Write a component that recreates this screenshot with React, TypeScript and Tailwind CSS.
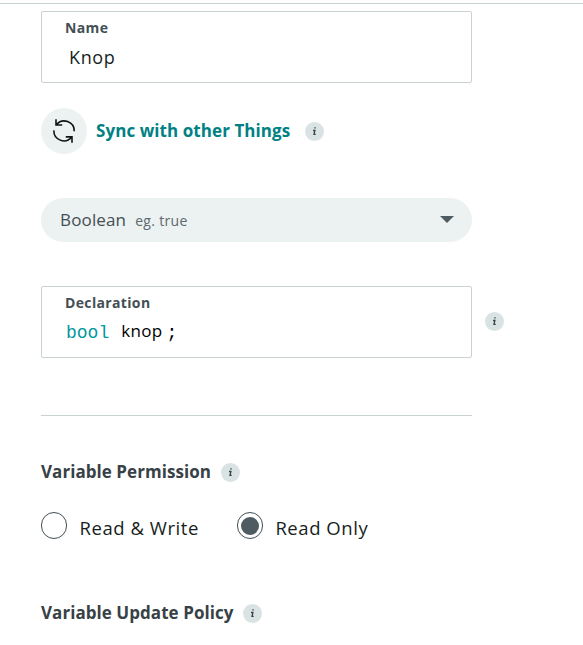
import React from "react";

function Info({ className = "" }: { className?: string }) {
  return (
    <span className={`flex h-[19px] w-[19px] shrink-0 items-center justify-center rounded-full bg-[#dae3e3] ${className}`}>
      <svg width="5" height="9" viewBox="0 0 5 9" fill="none" stroke="#374146" strokeWidth="1.3">
        <path d="M2.3 0.9h1.4M1 3.5h1.9L2 7.4h1.7" />
      </svg>
    </span>
  );
}

function Field({ label, children }: { label: string; children: React.ReactNode }) {
  return (
    <div className="h-[72px] w-[431px] shrink-0 rounded-[2px] border border-[#c9d2d2] pl-[23px] pt-[6px]">
      <div className="text-[14px] font-bold leading-[19px] tracking-[0.35px] text-[#434f54]">{label}</div>
      {children}
    </div>
  );
}

function Radio({ label, checked = false }: { label: string; checked?: boolean }) {
  return (
    <div className="flex items-center">
      <span className="flex h-[27px] w-[26px] items-center justify-center rounded-full border border-[#434f54]">
        {checked && <span className="h-[18px] w-[18px] rounded-full bg-[#4e5b61]" />}
      </span>
      <span className="ml-[12.5px] mt-[5px] text-[18.5px] leading-6 tracking-[0.55px] text-[#171e21]">{label}</span>
    </div>
  );
}

export default function App() {
  return (
    <div className="h-[645px] w-[583px] overflow-hidden bg-white pt-[3px] font-['Open_Sans',sans-serif]">
      <div className="h-px bg-[#c9d2d2]" />
      <div className="pl-[41px] pt-[7px]">
        <Field label="Name">
          <div className="ml-[4px] mt-[8px] text-[18px] leading-6 tracking-[0.65px] text-[#171e21]">Knop</div>
        </Field>
        <div className="mt-[25px] flex h-[46px] items-center">
          <span className="flex h-[46px] w-[46px] items-center justify-center rounded-full bg-[#ecf1f1]">
            <svg width="24" height="26" viewBox="0 0 24 26" fill="none" stroke="#101415" strokeWidth="1.6">
              <path d="M4 1.2V7h6.2M4.5 6.6A10 10 0 0 1 22.2 13.2M20 24.8v-5.9h-6.2M19.5 19.3A10 10 0 0 1 1.9 12.4" />
            </svg>
          </span>
          <span className="ml-[9px] text-[17px] font-bold leading-6 tracking-[0.07px] text-[#008184]">Sync with other Things</span>
          <Info className="ml-[15px]" />
        </div>
        <div className="mt-[44px] flex h-[44px] w-[431px] items-center rounded-full bg-[#ecf1f1] pl-[19px] pr-[18px] text-[#434f54]">
          <span className="text-[17px] tracking-[0.15px]">Boolean</span>
          <span className="ml-[9px] text-[14px] tracking-[0.3px] text-[#5d696e]">eg. true</span>
          <svg className="mb-[2px] ml-auto" width="14" height="7" viewBox="0 0 14 7"><path d="M0 0h14L7 7z" fill="#4e5b61" /></svg>
        </div>
        <div className="mt-[44px] flex items-center">
          <Field label="Declaration">
            <div className="ml-[1px] mt-[8px] flex h-6 items-center text-[18px]">
              <span className="mt-[2px] font-['Liberation_Mono',monospace] text-[#00979d]">bool</span>
              <span className="mb-[2px] ml-[12px] text-[17px] tracking-[0.3px] text-black">knop</span>
              <span className="ml-[4px] mt-[2px] font-['Liberation_Mono',monospace] text-black">;</span>
            </div>
          </Field>
          <Info className="mb-[2px] ml-[13px]" />
        </div>
        <div className="mt-[57px] h-px w-[431px] bg-[#c9d2d2]" />
        <div className="mt-[44px] flex h-6 items-center">
          <span className="text-[17px] font-bold tracking-[0.05px] text-[#374146]">Variable Permission</span>
          <Info className="ml-[10px]" />
        </div>
        <div className="mt-[27px] flex gap-[38px]">
          <Radio label="Read & Write" />
          <Radio label="Read Only" checked />
        </div>
        <div className="mt-[61px] flex h-6 items-center">
          <span className="text-[17px] font-bold tracking-[0.05px] text-[#374146]">Variable Update Policy</span>
          <Info className="ml-[10px]" />
        </div>
      </div>
    </div>
  );
}
